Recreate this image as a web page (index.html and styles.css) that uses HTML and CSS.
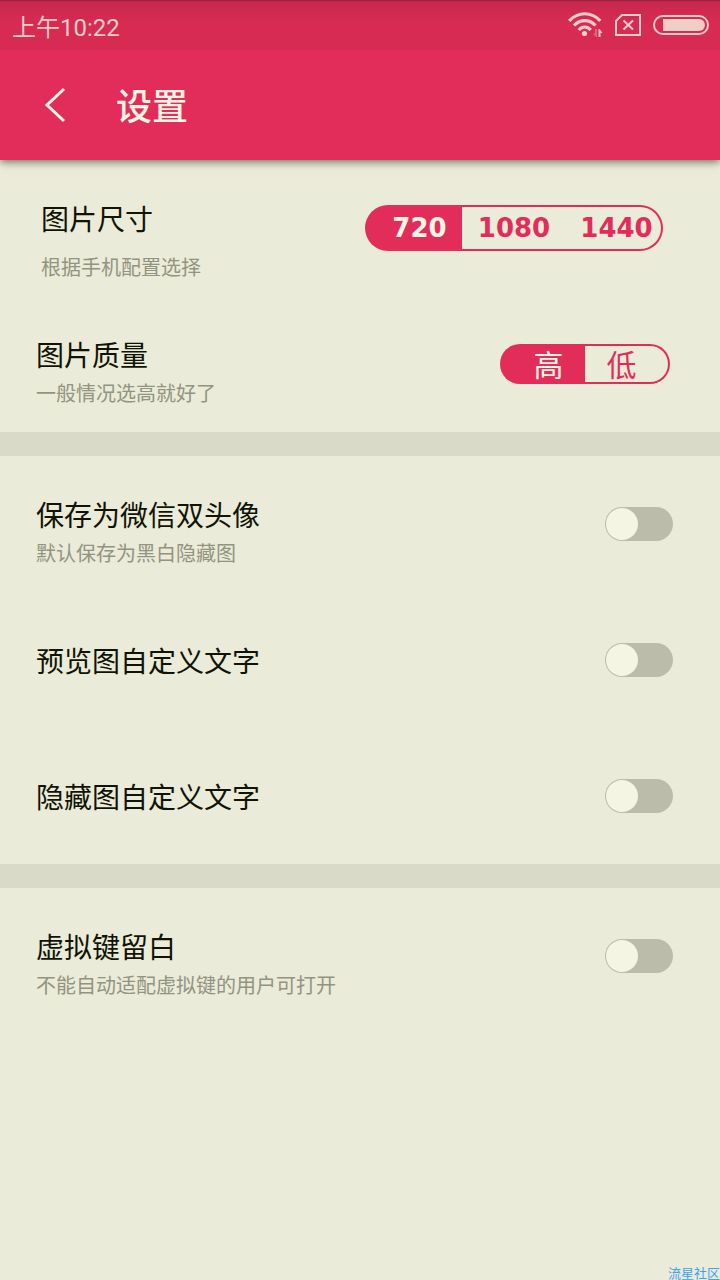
FILE: index.html
```html
<!DOCTYPE html>
<html lang="zh-CN">
<head>
<meta charset="utf-8">
<meta name="viewport" content="width=device-width, initial-scale=1">
<title>设置</title>
<link rel="stylesheet" href="styles.css">
</head>
<body>
<div class="page">
  <header class="top">
    <div class="status">
      <span class="clock">上午10:22</span>
      <div class="indicators">
        <svg class="wifi" width="35" height="26" viewBox="0 0 35 26" fill="none" stroke="currentColor" stroke-width="3.200" aria-hidden="true">
          <path d="M1.200 8.800C10 -.6 23.500 -.6 32.300 8.800M6 13.500C12.300 7 21.200 7 27.500 13.500M10.700 18C14.500 14 19 14 22.800 18"/>
          <circle cx="16.500" cy="21.500" r="2.600" fill="currentColor" stroke="none"/>
          <path d="M27 17h2v8h-1l-3-3.500h2Z" fill="currentColor" stroke="none" opacity=".35"/>
          <path d="M30.500 25v-8h1l3 4h-2v4Z" fill="currentColor" stroke="none"/>
        </svg>
        <svg class="sim" width="26" height="22" viewBox="0 0 26 22" fill="none" stroke="currentColor" stroke-width="2" aria-hidden="true">
          <path d="M7 1H25V21H1V7Z"/>
          <path d="M8.500 6.500L18 15.500M18 6.500L8.500 15.500"/>
        </svg>
        <svg class="battery" width="56" height="20" viewBox="0 0 56 20" aria-hidden="true">
          <rect x="1" y="1" width="54" height="18" rx="9" fill="none" stroke="currentColor" stroke-width="2"/>
          <path fill="currentColor" d="M10 4H46a6 6 0 0 1 0 12H10Z"/>
        </svg>
      </div>
    </div>
    <div class="bar">
      <button class="back" type="button" aria-label="返回">
        <svg width="24" height="38" viewBox="0 0 24 38" fill="none" stroke="currentColor" stroke-width="3" aria-hidden="true"><path d="M21 3L4 19L21 35"/></svg>
      </button>
      <h1 class="heading">设置</h1>
    </div>
  </header>

  <main>
    <section class="group">
      <div class="row row-size">
        <div class="text text-spaced">
          <h2 class="title" id="size-title">图片尺寸</h2>
          <p class="note">根据手机配置选择</p>
        </div>
        <div class="segments segments-size" role="radiogroup" aria-labelledby="size-title">
          <label class="segment"><input class="choice" type="radio" name="size" value="720" checked><span class="face">720</span></label>
          <label class="segment"><input class="choice" type="radio" name="size" value="1080"><span class="face">1080</span></label>
          <label class="segment"><input class="choice" type="radio" name="size" value="1440"><span class="face">1440</span></label>
        </div>
      </div>
      <div class="row">
        <div class="text">
          <h2 class="title" id="quality-title">图片质量</h2>
          <p class="note">一般情况选高就好了</p>
        </div>
        <div class="segments segments-quality" role="radiogroup" aria-labelledby="quality-title">
          <label class="segment"><input class="choice" type="radio" name="quality" value="high" checked><span class="face">高</span></label>
          <label class="segment"><input class="choice" type="radio" name="quality" value="low"><span class="face">低</span></label>
        </div>
      </div>
    </section>

    <section class="group">
      <div class="row">
        <div class="text">
          <label class="title" for="avatar">保存为微信双头像</label>
          <p class="note">默认保存为黑白隐藏图</p>
        </div>
        <input class="switch" type="checkbox" role="switch" id="avatar">
      </div>
      <div class="row">
        <div class="text text-single"><label class="title" for="preview">预览图自定义文字</label></div>
        <input class="switch" type="checkbox" role="switch" id="preview">
      </div>
      <div class="row">
        <div class="text text-single"><label class="title" for="hidden-text">隐藏图自定义文字</label></div>
        <input class="switch" type="checkbox" role="switch" id="hidden-text">
      </div>
    </section>

    <section class="group">
      <div class="row">
        <div class="text">
          <label class="title" for="keys">虚拟键留白</label>
          <p class="note">不能自动适配虚拟键的用户可打开</p>
        </div>
        <input class="switch" type="checkbox" role="switch" id="keys">
      </div>
    </section>
  </main>
  <span class="watermark">流星社区</span>
</div>
</body>
</html>
```
FILE: styles.css
```css
:root {
  --accent: #e22d5a;
  --paper: #eaebd9;
  --cream: #f7f5e3;
}

* {
  box-sizing: border-box;
}

body {
  margin: 0;
  background: var(--paper);
  color: #111304;
  font-family: "Noto Sans CJK SC", "Noto Sans", sans-serif;
}

.page {
  position: relative;
  min-height: 100vh;
}

.top {
  position: relative;
  background: var(--accent);
  box-shadow: 0 2px 8px rgba(30, 32, 10, 0.6);
}

.status {
  display: flex;
  align-items: center;
  justify-content: space-between;
  height: 50px;
  padding: 0 11px 0 12px;
  background: linear-gradient(#8f1f3c 0, #c9284e 2px, #d72b54 24px, #d72b54 100%);
  color: #f0cdc6;
}

.clock {
  padding-top: 6px;
  font-family: Roboto, "Noto Sans CJK SC", sans-serif;
  font-size: 24px;
  line-height: 36px;
}

.indicators {
  display: flex;
  align-items: center;
  gap: 12px;
}

.bar {
  display: flex;
  align-items: center;
  gap: 36px;
  height: 110px;
  padding: 0 30px;
}

.back {
  display: flex;
  align-items: center;
  justify-content: center;
  width: 50px;
  height: 50px;
  padding: 0;
  border: 0;
  background: none;
  color: var(--cream);
}

.heading {
  margin: 0;
  padding-bottom: 2px;
  color: var(--cream);
  font-size: 36px;
  font-weight: 500;
  line-height: 50px;
}

.group + .group {
  border-top: 24px solid #d9dac8;
}

.row {
  display: flex;
  align-items: center;
  justify-content: space-between;
  min-height: 136px;
  padding: 0 47px 0 36px;
}

.row-size {
  padding-left: 41px;
}

.text {
  display: flex;
  flex-direction: column;
  align-self: flex-start;
  padding-top: 39px;
}

.text-spaced {
  gap: 10px;
}

.text-single {
  align-self: center;
  padding-top: 0;
}

.title {
  margin: 0;
  font-size: 28px;
  font-weight: 400;
  line-height: 38px;
}

.note {
  margin: 0;
  color: #92947f;
  font-size: 20px;
  line-height: 40px;
}

.segments {
  display: flex;
  color: var(--accent);
}

.segments-size {
  width: 298px;
  height: 46px;
  margin-right: 10px;
  font: 700 26px "DejaVu Sans", sans-serif;
}

.segments-quality {
  width: 170px;
  height: 40px;
  margin-right: 3px;
}

.segment {
  position: relative;
  display: flex;
  flex: 1;
}

.choice {
  position: absolute;
  inset: 0;
  margin: 0;
  opacity: 0;
}

.face {
  display: flex;
  flex: 1;
  align-items: center;
  justify-content: center;
  border: 2px solid var(--accent);
  border-width: 2px 0;
  line-height: 36px;
}

.segment:first-child .face {
  padding-left: 10px;
  border-left-width: 2px;
  border-radius: 24px 0 0 24px;
}

.segment:last-child .face {
  border-right-width: 2px;
  border-radius: 0 24px 24px 0;
}

.segments-size .segment:nth-child(2) {
  flex: 0 0 104px;
}

.segments-size .segment:last-child .face {
  padding-left: 6px;
}

.segments-quality .face {
  padding-bottom: 2px;
  font-size: 30px;
}

.segments-quality .segment:last-child .face {
  padding-right: 10px;
}

.choice:checked + .face {
  background: var(--accent);
  color: var(--cream);
}

.switch {
  display: flex;
  width: 68px;
  height: 34px;
  margin: 0;
  padding: 1px;
  appearance: none;
  border-radius: 17px;
  background: #bbbcaa;
}

.switch::before {
  content: "";
  width: 32px;
  height: 32px;
  border-radius: 50%;
  background: #f4f5e3;
}

.switch:checked {
  justify-content: flex-end;
  background: var(--accent);
}

.watermark {
  position: absolute;
  right: 0;
  bottom: 0;
  color: #3ba3f2;
  font-size: 13px;
  line-height: 14px;
}
```
